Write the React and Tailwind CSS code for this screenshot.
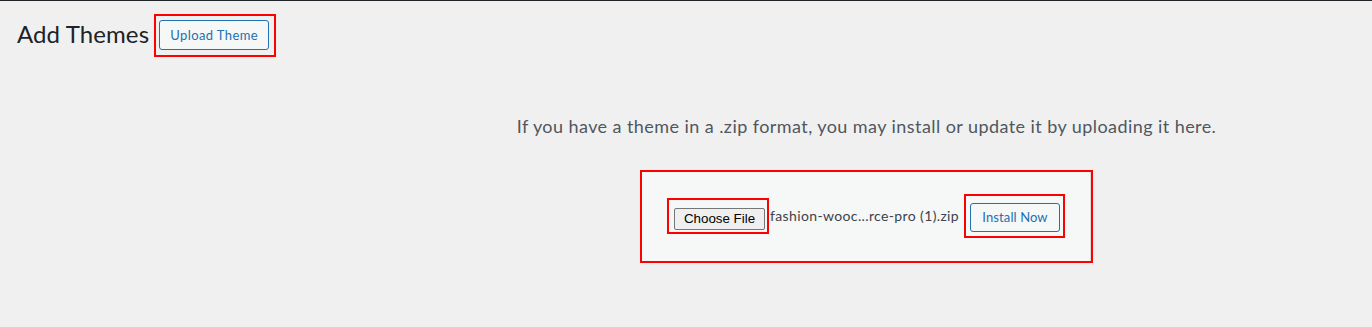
export default function App() {
  const font = { fontFamily: 'Lato, "Open Sans", sans-serif' };
  return (
    <div className="w-[1372px] h-[327px] bg-[#f0f0f1] border-t border-[#1d2327] overflow-hidden" style={font}>
      <div className="flex items-start pl-[17px] pt-[13px]">
        <h1 className="text-[24px] leading-[40px] text-[#1d2327] font-normal tracking-[0.1px]">Add Themes</h1>
        <div className="ml-[5px] border-2 border-[#ff0000] pl-[3px] pr-[5px] pt-[4px] pb-[5px]">
          <button className="h-[30px] w-[110px] rounded-[3px] border border-[#2271b1] bg-[#f6f7f7] text-[#2271b1] text-[13px] tracking-[0.4px] leading-[28px]">
            Upload Theme
          </button>
        </div>
      </div>
      <div className="pl-[361px] flex flex-col items-center">
        <p className="mt-[55px] text-[18px] leading-[28px] text-[#50575e] text-center tracking-[0.43px]">
          If you have a theme in a .zip format, you may install or update it by uploading it here.
        </p>
        <div className="mt-[30px] w-[453px] h-[93px] border-2 border-[#ff0000]">
          <div className="h-full bg-[#f6f7f7] border-r border-[#dcdcde] flex items-center pl-[25px]">
            <div className="border-2 border-[#ff0000] pl-[5px] pr-[2px] pt-[5px] pb-[2px] mt-[-2px]">
              <button
                className="h-[22px] w-[91px] rounded-[2px] border border-[#767676] bg-[#efefef] text-[13.33px] text-black leading-[20px]"
                style={{ fontFamily: '"Liberation Sans", Arial, sans-serif' }}
              >
                Choose File
              </button>
            </div>
            <span className="ml-[1px] w-[194px] text-[14px] text-[#3c434a] tracking-[0.37px] whitespace-nowrap mt-[-2px]">fashion-wooc...rce-pro (1).zip</span>
            <div className="border-2 border-[#ff0000] pl-[4px] pr-[3px] pt-[7px] pb-[4px] mt-[-2px]">
              <button className="h-[29px] w-[90px] rounded-[3px] border border-[#2271b1] bg-[#f6f7f7] text-[#2271b1] text-[13px] tracking-[0.1px] leading-[27px]">
                Install Now
              </button>
            </div>
          </div>
        </div>
      </div>
    </div>
  );
}
